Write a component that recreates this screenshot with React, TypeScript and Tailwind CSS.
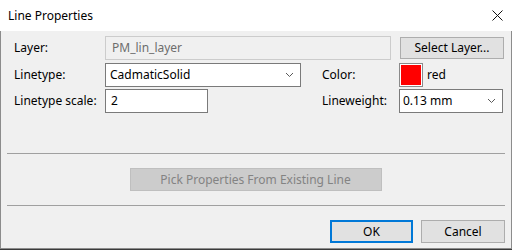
import React from "react";

const Chevron = () => (
  <svg width="9" height="6" viewBox="0 0 9 6" className="shrink-0">
    <polyline points="1,1 4.5,4.5 8,1" fill="none" stroke="#5a5a5a" strokeWidth="1" />
  </svg>
);

const App = () => {
  return (
    <div
      className="w-[512px] h-[250px] bg-[#3a3a3a] text-[12px] text-black"
      style={{ fontFamily: '"Segoe UI", "Noto Sans", "Liberation Sans", sans-serif' }}
    >
      <div className="w-[512px] h-[249px] flex flex-col bg-[#f0f0f0] border border-[#8c8c8c] border-t-0">
        <div className="h-[31px] bg-white flex items-center justify-between pl-[8px] pr-[9px] -mx-px">
          <span className="leading-none">Line Properties</span>
          <svg width="11" height="11" viewBox="0 0 11 11">
            <path d="M0.5 0.5 L10.5 10.5 M10.5 0.5 L0.5 10.5" stroke="#111" strokeWidth="1" />
          </svg>
        </div>

        <div className="flex flex-col pt-[5px] pl-[13px]">
          <div className="flex items-center h-[24px]">
            <span className="w-[91px]">Layer:</span>
            <div className="w-[286px] h-[24px] border border-[#cccccc] bg-[#f0f0f0] flex items-center pl-[6px] text-[#6d6d6d]">
              PM_lin_layer
            </div>
            <button className="ml-[9px] w-[104px] h-[22px] border border-[#adadad] bg-[#e1e1e1] flex items-center justify-center">
              Select Layer...
            </button>
          </div>

          <div className="flex items-center h-[24px] mt-[3px]">
            <span className="w-[91px]">Linetype:</span>
            <div className="w-[196px] h-[24px] border border-[#7a7a7a] bg-white flex items-center justify-between pl-[4px] pr-[6px]">
              <span>CadmaticSolid</span>
              <Chevron />
            </div>
            <span className="ml-[21px] w-[77px]">Color:</span>
            <div className="w-[24px] h-[24px] border border-[#8a8a8a] bg-white p-px">
              <div className="w-full h-full bg-[#ff0000]" />
            </div>
            <span className="ml-[4px]">red</span>
          </div>

          <div className="flex items-center h-[24px] mt-[2px]">
            <span className="w-[91px]">Linetype scale:</span>
            <div className="w-[103px] h-[24px] border border-[#7a7a7a] bg-white flex items-center pl-[5px]">
              2
            </div>
            <span className="ml-[114px] w-[77px]">Lineweight:</span>
            <div className="w-[104px] h-[24px] border border-[#7a7a7a] bg-white flex items-center justify-between pl-[3px] pr-[6px]">
              <span>0.13 mm</span>
              <Chevron />
            </div>
          </div>
        </div>

        <div className="mx-[6px] mt-[40px] h-px bg-[#a0a0a0]" />

        <div className="flex justify-center mt-[14px]">
          <button
            disabled
            className="ml-[-1px] w-[252px] h-[23px] border border-[#bfbfbf] bg-[#cccccc] text-[#838383] flex items-center justify-center"
          >
            Pick Properties From Existing Line
          </button>
        </div>

        <div className="mx-[6px] mt-[14px] h-px bg-[#a0a0a0]" />

        <div className="flex justify-end gap-[8px] pr-[6px] mt-[14px]">
          <button className="w-[83px] h-[23px] border-2 border-[#0078d7] bg-[#e1e1e1] flex items-center justify-center">
            OK
          </button>
          <button className="w-[84px] h-[23px] border border-[#adadad] bg-[#e1e1e1] flex items-center justify-center">
            Cancel
          </button>
        </div>
      </div>
    </div>
  );
};

export default App;
